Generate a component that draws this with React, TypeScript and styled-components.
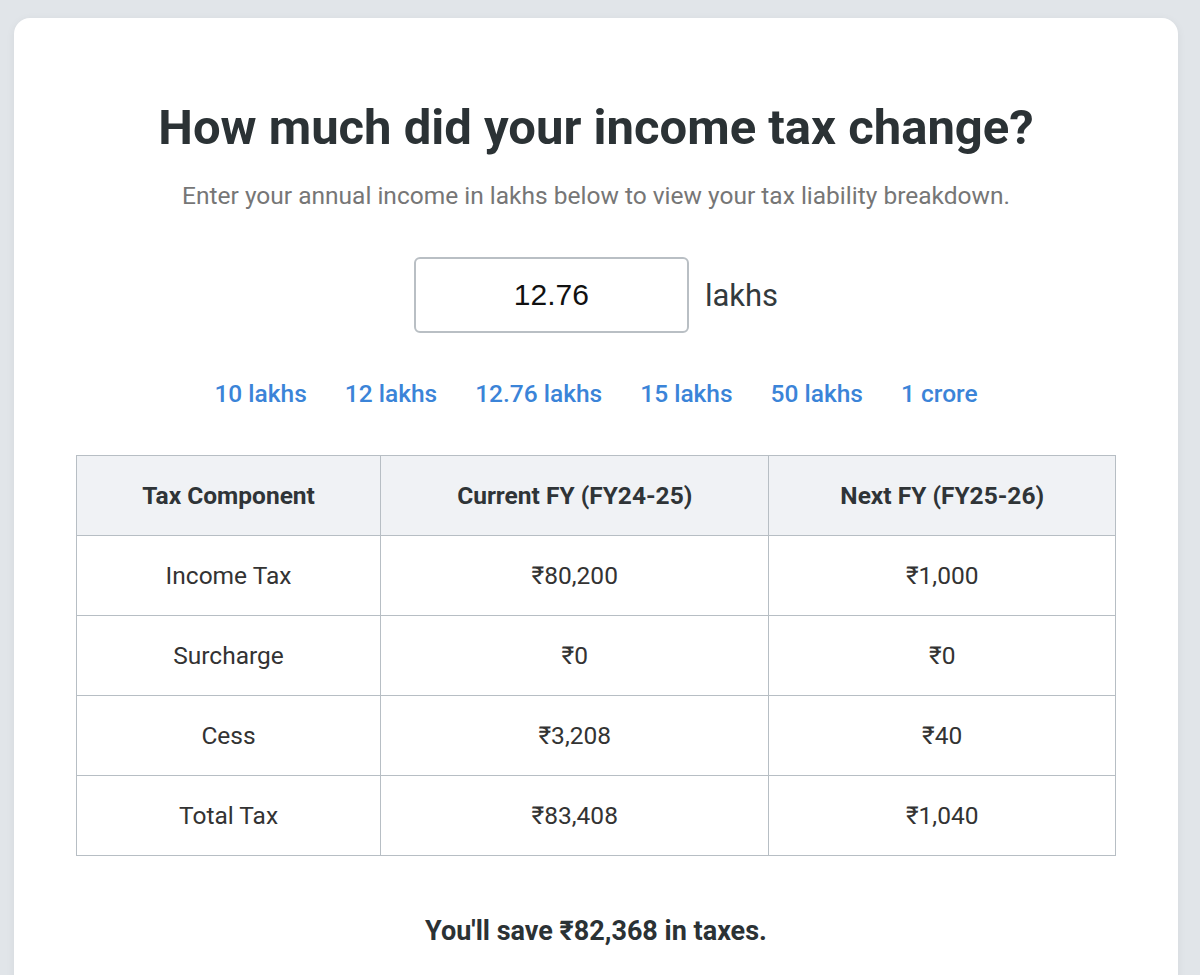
import styled, { createGlobalStyle } from "styled-components";

interface TaxRow {
  label: string;
  current: string;
  next: string;
}

const rows: TaxRow[] = [
  { label: "Income Tax", current: "₹80,200", next: "₹1,000" },
  { label: "Surcharge", current: "₹0", next: "₹0" },
  { label: "Cess", current: "₹3,208", next: "₹40" },
  { label: "Total Tax", current: "₹83,408", next: "₹1,040" },
];

const presets = ["10 lakhs", "12 lakhs", "12.76 lakhs", "15 lakhs", "50 lakhs", "1 crore"];

const GlobalStyle = createGlobalStyle`
  html, body {
    margin: 0;
    background: #e1e5e9;
  }
  body {
    font-family: Roboto, "Noto Sans", sans-serif;
    color: #2d3335;
  }
`;

const Page = styled.div`
  padding: 18px 22px 0 14px;
  height: 975px;
  overflow: hidden;
  box-sizing: border-box;
`;

const Card = styled.main`
  background: #fff;
  border-radius: 16px;
  box-shadow: 0 2px 10px rgba(0, 0, 0, 0.06);
  padding: 80px 62px 120px;
  display: flex;
  flex-direction: column;
  align-items: center;
`;

const Title = styled.h1`
  margin: 0;
  font-size: 49px;
  font-weight: 700;
  line-height: 59px;
  color: #2b3235;
`;

const Subtitle = styled.p`
  margin: 24px 0 0;
  font-size: 24.5px;
  line-height: 29px;
  color: #767676;
`;

const InputRow = styled.div`
  margin-top: 47px;
  display: flex;
  align-items: center;
  gap: 16px;
`;

const AmountInput = styled.input`
  width: 275px;
  height: 76px;
  box-sizing: border-box;
  border: 2px solid #b9bfc4;
  border-radius: 6px;
  font-family: "Liberation Sans", Arial, sans-serif;
  font-size: 30px;
  color: #111;
  text-align: center;
  outline: none;
`;

const Unit = styled.span`
  font-size: 31px;
  color: #333a3d;
`;

const Presets = styled.div`
  margin-top: 46px;
  display: flex;
  gap: 38px;
  line-height: 29px;
`;

const PresetLink = styled.a`
  font-size: 24.5px;
  font-weight: 500;
  color: #3b84d8;
  text-decoration: none;
  cursor: pointer;
`;

const Table = styled.table`
  margin-top: 47px;
  width: 100%;
  border-collapse: collapse;
  font-size: 24.5px;
  color: #333;
`;

const HeadCell = styled.th<{ $w: number }>`
  width: ${(p) => p.$w}px;
  height: 79.1px;
  padding: 0;
  background: #f0f2f5;
  border: 1.5px solid #b7bec4;
  font-weight: 700;
  color: #2f3437;
  text-align: center;
`;

const Cell = styled.td`
  height: 79.1px;
  padding: 0;
  border: 1.5px solid #b7bec4;
  text-align: center;
`;

const Savings = styled.p`
  margin: 59px 0 0;
  font-size: 27px;
  line-height: 32px;
  font-weight: 700;
  color: #2b3235;
`;

export default function App() {
  return (
    <>
      <GlobalStyle />
      <Page>
        <Card>
          <Title>How much did your income tax change?</Title>
          <Subtitle>
            Enter your annual income in lakhs below to view your tax liability breakdown.
          </Subtitle>
          <InputRow>
            <AmountInput defaultValue="12.76" />
            <Unit>lakhs</Unit>
          </InputRow>
          <Presets>
            {presets.map((p) => (
              <PresetLink key={p}>{p}</PresetLink>
            ))}
          </Presets>
          <Table>
            <thead>
              <tr>
                <HeadCell $w={304}>Tax Component</HeadCell>
                <HeadCell $w={389}>Current FY (FY24-25)</HeadCell>
                <HeadCell $w={347}>Next FY (FY25-26)</HeadCell>
              </tr>
            </thead>
            <tbody>
              {rows.map((r) => (
                <tr key={r.label}>
                  <Cell>{r.label}</Cell>
                  <Cell>{r.current}</Cell>
                  <Cell>{r.next}</Cell>
                </tr>
              ))}
            </tbody>
          </Table>
          <Savings>You'll save ₹82,368 in taxes.</Savings>
        </Card>
      </Page>
    </>
  );
}
